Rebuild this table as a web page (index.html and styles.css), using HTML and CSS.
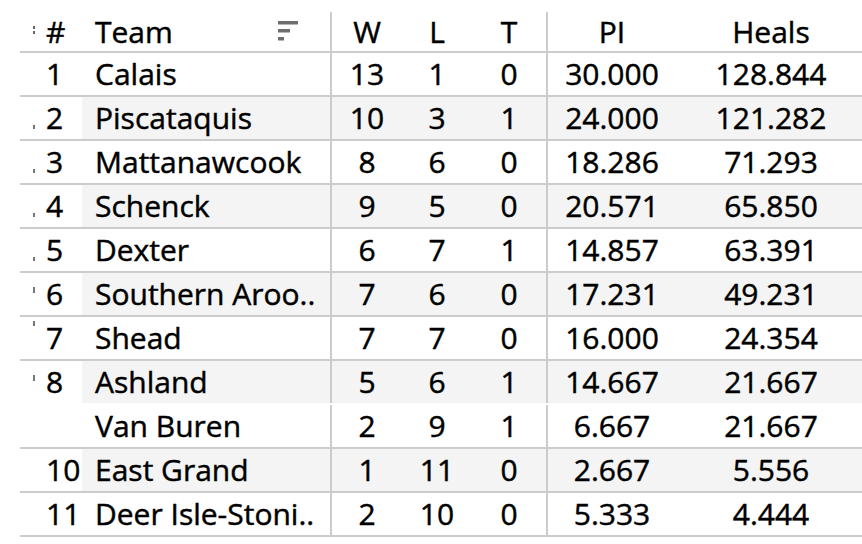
FILE: index.html
```html
<!DOCTYPE html>
<html>
<head>
<meta charset="utf-8">
<link rel="stylesheet" href="styles.css">
</head>
<body>
<div class="sheet">
  <div class="row head">
    <div class="c rank"><span class="tick t-head"></span><span>#</span></div>
    <div class="c team"><span>Team</span>
      <svg class="sort" width="20" height="20" viewBox="0 0 20 20"><rect x="0" y="0" width="20" height="3.5" fill="#6e6e6e"/><rect x="0" y="8" width="12" height="3.5" fill="#6e6e6e"/><rect x="0" y="16" width="6" height="3.5" fill="#6e6e6e"/></svg>
    </div>
    <div class="c w">W</div><div class="c l">L</div><div class="c t">T</div>
    <div class="c pi">PI</div><div class="c heals">Heals</div>
  </div>
  <div class="row"><div class="c rank"><span class="tick"></span><span>1</span></div><div class="c team">Calais</div><div class="c w">13</div><div class="c l">1</div><div class="c t">0</div><div class="c pi">30.000</div><div class="c heals">128.844</div></div>
  <div class="row band"><div class="c rank"><span class="tick t-low"></span><span>2</span></div><div class="c team">Piscataquis</div><div class="c w">10</div><div class="c l">3</div><div class="c t">1</div><div class="c pi">24.000</div><div class="c heals">121.282</div></div>
  <div class="row"><div class="c rank"><span class="tick t-low"></span><span>3</span></div><div class="c team">Mattanawcook</div><div class="c w">8</div><div class="c l">6</div><div class="c t">0</div><div class="c pi">18.286</div><div class="c heals">71.293</div></div>
  <div class="row band"><div class="c rank"><span class="tick t-low"></span><span>4</span></div><div class="c team">Schenck</div><div class="c w">9</div><div class="c l">5</div><div class="c t">0</div><div class="c pi">20.571</div><div class="c heals">65.850</div></div>
  <div class="row"><div class="c rank"><span class="tick t-low"></span><span>5</span></div><div class="c team">Dexter</div><div class="c w">6</div><div class="c l">7</div><div class="c t">1</div><div class="c pi">14.857</div><div class="c heals">63.391</div></div>
  <div class="row band"><div class="c rank"><span class="tick t-mid"></span><span>6</span></div><div class="c team">Southern Aroo..</div><div class="c w">7</div><div class="c l">6</div><div class="c t">0</div><div class="c pi">17.231</div><div class="c heals">49.231</div></div>
  <div class="row"><div class="c rank"><span class="tick t-top"></span><span>7</span></div><div class="c team">Shead</div><div class="c w">7</div><div class="c l">7</div><div class="c t">0</div><div class="c pi">16.000</div><div class="c heals">24.354</div></div>
  <div class="row band noline"><div class="c rank"><span class="tick t-mid"></span><span>8</span></div><div class="c team">Ashland</div><div class="c w">5</div><div class="c l">6</div><div class="c t">1</div><div class="c pi">14.667</div><div class="c heals">21.667</div></div>
  <div class="row"><div class="c rank"><span class="tick none"></span><span></span></div><div class="c team">Van Buren</div><div class="c w">2</div><div class="c l">9</div><div class="c t">1</div><div class="c pi">6.667</div><div class="c heals">21.667</div></div>
  <div class="row band"><div class="c rank"><span class="tick none"></span><span>10</span></div><div class="c team">East Grand</div><div class="c w">1</div><div class="c l">11</div><div class="c t">0</div><div class="c pi">2.667</div><div class="c heals">5.556</div></div>
  <div class="row"><div class="c rank"><span class="tick none"></span><span>11</span></div><div class="c team">Deer Isle-Stoni..</div><div class="c w">2</div><div class="c l">10</div><div class="c t">0</div><div class="c pi">5.333</div><div class="c heals">4.444</div></div>
</div>
</body>
</html>
```
FILE: styles.css
```css
html, body {
  margin: 0;
  padding: 0;
  background: #ffffff;
  overflow: hidden;
}
body {
  width: 862px;
  height: 544px;
  font-family: "Open Sans", "Noto Sans", sans-serif;
  font-size: 30px;
  color: #000000;
  -webkit-text-stroke: 0.45px #000000;
}
.sheet {
  display: flex;
  flex-direction: column;
  padding: 12px 0 0 20px;
  width: 846px;
}
.row {
  display: flex;
  height: 42px;
  line-height: 42px;
  border-bottom: 2px solid #cccccc;
}
.row.head {
  height: 39px;
  line-height: 39px;
}
.row.noline {
  border-bottom-color: transparent;
}
.c {
  flex: none;
  white-space: nowrap;
  overflow: hidden;
  box-sizing: border-box;
}
.rank {
  width: 62px;
  display: flex;
  align-items: stretch;
  background: #ffffff;
}
.tick {
  width: 2px;
  margin-left: 13px;
  margin-right: 11px;
}
.tick::after {
  content: "";
  display: block;
  width: 2px;
  background: #777777;
}
.t-head::after { height: 10px; margin-top: 14px; background: repeating-linear-gradient(#666 0 3px, transparent 3px 5px); }
.t-low::after { height: 4px; margin-top: 28px; }
.t-mid::after { height: 6px; margin-top: 14px; }
.t-top::after { height: 5px; margin-top: 4px; }
.none::after { display: none; }
.team {
  width: 250px;
  padding-left: 13px;
  border-right: 2px solid #cccccc;
  display: flex;
  align-items: center;
}
.sort {
  margin-left: auto;
  margin-right: 32px;
  margin-top: -2px;
}
.w { width: 70px; text-align: center; }
.l { width: 70px; text-align: center; }
.t { width: 76px; text-align: center; border-right: 2px solid #cccccc; }
.pi { width: 128px; text-align: center; }
.heals { width: 190px; text-align: center; }
.band .c { background: #f4f4f4; }
.band .rank { background: #ffffff; }
```
